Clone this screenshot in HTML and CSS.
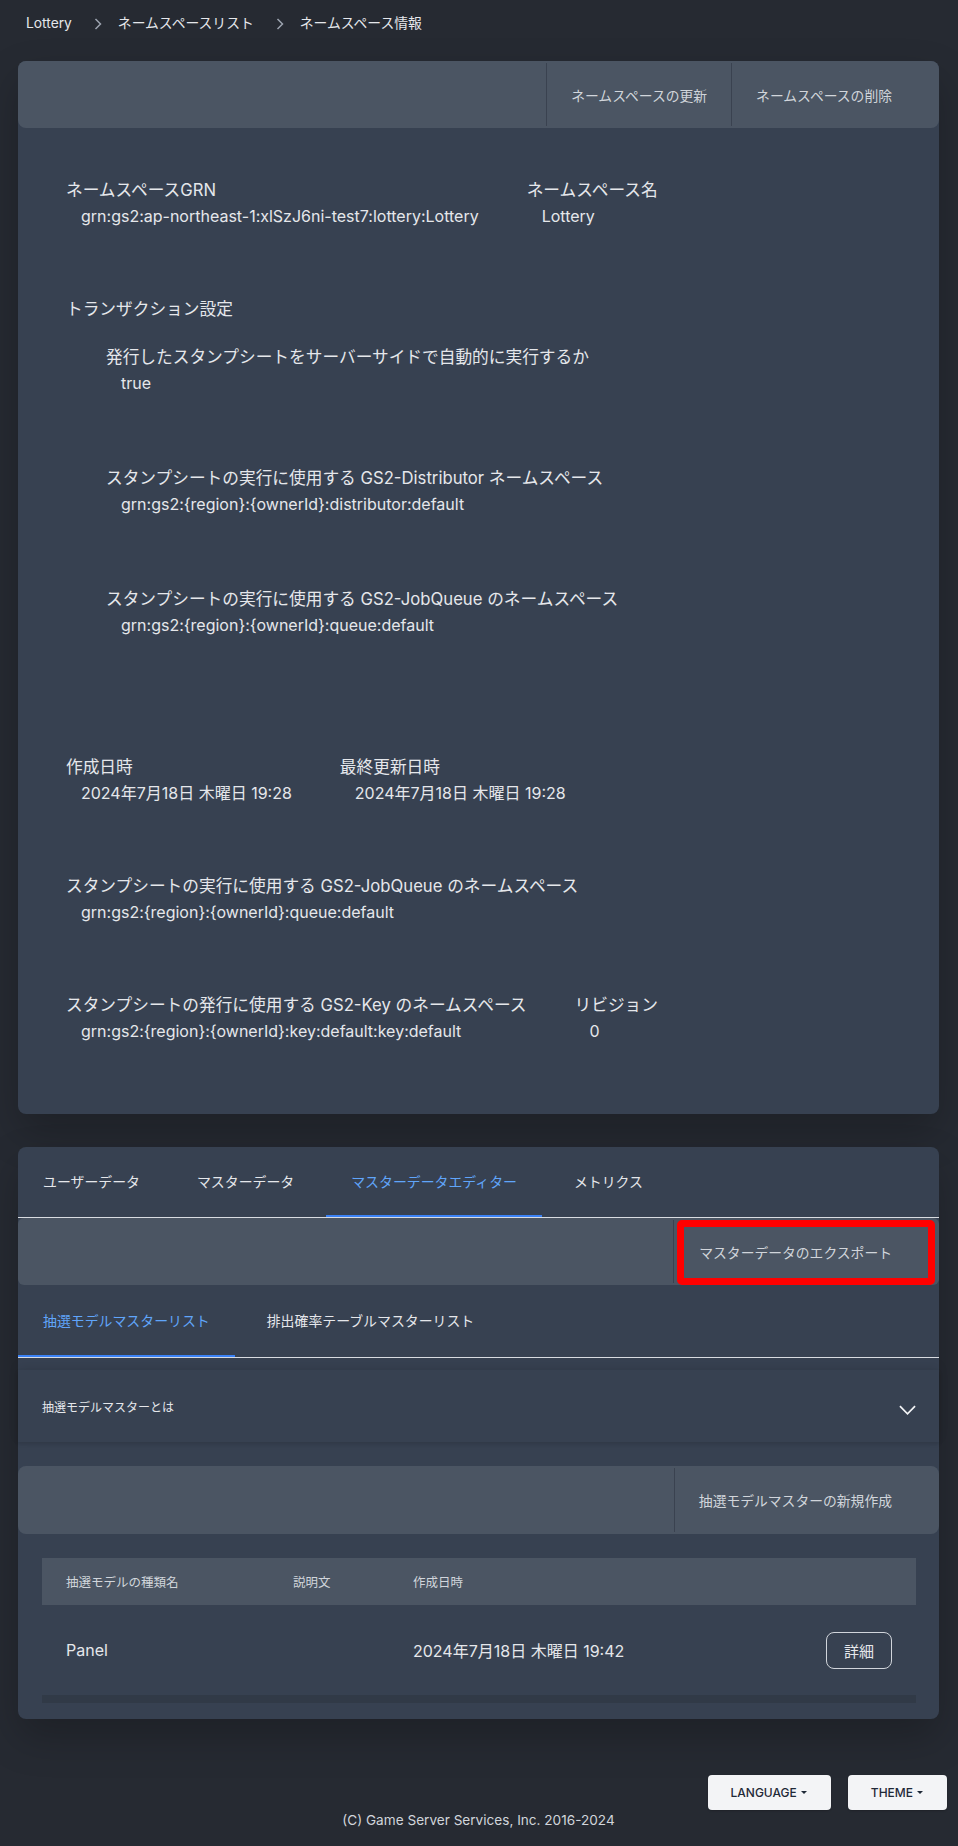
FILE: index.html
```html
<!DOCTYPE html>
<html lang="ja">
<head>
<meta charset="utf-8">
<title>ネームスペース情報</title>
<link rel="stylesheet" href="styles.css">
</head>
<body>
<div class="page">
  <nav class="crumbs">
    <span class="crumb">Lottery</span>
    <svg class="sep" viewBox="0 0 8 12"><path d="M1.5 1 L6.5 6 L1.5 11"/></svg>
    <span class="crumb">ネームスペースリスト</span>
    <svg class="sep" viewBox="0 0 8 12"><path d="M1.5 1 L6.5 6 L1.5 11"/></svg>
    <span class="crumb">ネームスペース情報</span>
  </nav>

  <section class="panel">
    <div class="toolbar">
      <button class="tb-btn">ネームスペースの更新</button>
      <button class="tb-btn">ネームスペースの削除</button>
    </div>
    <div class="info-body">
      <div class="row">
        <div class="field">
          <div class="flabel">ネームスペースGRN</div>
          <div class="fvalue">grn:gs2:ap-northeast-1:xlSzJ6ni-test7:lottery:Lottery</div>
        </div>
        <div class="field">
          <div class="flabel">ネームスペース名</div>
          <div class="fvalue">Lottery</div>
        </div>
      </div>

      <div class="group">
        <div class="flabel">トランザクション設定</div>
        <div class="nested">
          <div class="field">
            <div class="flabel">発行したスタンプシートをサーバーサイドで自動的に実行するか</div>
            <div class="fvalue">true</div>
          </div>
          <div class="field">
            <div class="flabel">スタンプシートの実行に使用する GS2-Distributor ネームスペース</div>
            <div class="fvalue">grn:gs2:{region}:{ownerId}:distributor:default</div>
          </div>
          <div class="field">
            <div class="flabel">スタンプシートの実行に使用する GS2-JobQueue のネームスペース</div>
            <div class="fvalue">grn:gs2:{region}:{ownerId}:queue:default</div>
          </div>
        </div>
      </div>

      <div class="row">
        <div class="field">
          <div class="flabel">作成日時</div>
          <div class="fvalue">2024年7月18日 木曜日 19:28</div>
        </div>
        <div class="field">
          <div class="flabel">最終更新日時</div>
          <div class="fvalue">2024年7月18日 木曜日 19:28</div>
        </div>
      </div>

      <div class="row">
        <div class="field">
          <div class="flabel">スタンプシートの実行に使用する GS2-JobQueue のネームスペース</div>
          <div class="fvalue">grn:gs2:{region}:{ownerId}:queue:default</div>
        </div>
      </div>

      <div class="row last">
        <div class="field">
          <div class="flabel">スタンプシートの発行に使用する GS2-Key のネームスペース</div>
          <div class="fvalue">grn:gs2:{region}:{ownerId}:key:default:key:default</div>
        </div>
        <div class="field">
          <div class="flabel">リビジョン</div>
          <div class="fvalue">0</div>
        </div>
      </div>
    </div>
  </section>

  <section class="panel master">
    <div class="tabs">
      <div class="tab">ユーザーデータ</div>
      <div class="tab">マスターデータ</div>
      <div class="tab active">マスターデータエディター</div>
      <div class="tab">メトリクス</div>
    </div>
    <div class="toolbar tb-square">
      <button class="tb-btn export">マスターデータのエクスポート</button>
    </div>
    <div class="tabs sub">
      <div class="tab active">抽選モデルマスターリスト</div>
      <div class="tab">排出確率テーブルマスターリスト</div>
    </div>
    <div class="accordion">
      <span class="acc-title">抽選モデルマスターとは</span>
      <svg class="chev" viewBox="0 0 18 10"><path d="M1 1 L9 9 L17 1"/></svg>
    </div>
    <div class="toolbar card-bar">
      <button class="tb-btn">抽選モデルマスターの新規作成</button>
    </div>
    <div class="table-wrap">
      <table class="models">
        <thead>
          <tr>
            <th class="c1">抽選モデルの種類名</th>
            <th class="c2">説明文</th>
            <th class="c3">作成日時</th>
            <th class="c4"></th>
          </tr>
        </thead>
        <tbody>
          <tr>
            <td class="c1">Panel</td>
            <td class="c2"></td>
            <td class="c3">2024年7月18日 木曜日 19:42</td>
            <td class="c4"><button class="detail">詳細</button></td>
          </tr>
        </tbody>
      </table>
      <div class="scrollbar"></div>
    </div>
  </section>

  <footer class="footer">
    <div class="footer-btns">
      <button class="pill">LANGUAGE<span class="caret"></span></button>
      <button class="pill">THEME<span class="caret"></span></button>
    </div>
    <p class="copy">(C) Game Server Services, Inc. 2016-2024</p>
  </footer>
</div>
</body>
</html>
```

FILE: styles.css
```css
* { box-sizing: border-box; }

html, body {
  margin: 0;
  padding: 0;
  background: #262a32;
}

body {
  font-family: Inter, "Noto Sans CJK JP", sans-serif;
  color: #e5e7eb;
  min-height: 1846px;
}

button {
  font: inherit;
  color: inherit;
  background: none;
  border: 0;
  padding: 0;
  margin: 0;
  cursor: pointer;
}

.page {
  padding: 0 19px 0 18px;
}

/* breadcrumb */
.crumbs {
  display: flex;
  align-items: center;
  padding: 14px 0 0 8px;
  height: 33px;
  margin-bottom: 28px;
  font-size: 13.8px;
  line-height: 19px;
  color: #e5e7eb;
}

.sep {
  width: 8px;
  height: 12px;
  margin: 0 16px 0 22px;
  fill: none;
  stroke: #9ca3af;
  stroke-width: 1.5;
}

/* panels */
.panel {
  background: #374151;
  border-radius: 8px;
  box-shadow: 0 18px 40px rgba(0, 0, 0, 0.22);
}

.toolbar {
  height: 67px;
  display: flex;
  justify-content: flex-end;
  align-items: stretch;
  padding: 2px 23px 2px 0;
  background: #4b5563;
  border-radius: 8px;
}

.tb-btn {
  display: flex;
  align-items: center;
  padding: 0 24px;
  border-left: 1px solid #3a4250;
  font-size: 13.8px;
  color: #d1d5db;
  white-space: nowrap;
}

/* info body */
.info-body {
  display: flex;
  flex-direction: column;
  padding: 49px 48px 0 48px;
}

.row {
  display: flex;
  gap: 48px;
  margin-bottom: 67px;
}

.row.last {
  margin-bottom: 70px;
}

.flabel {
  font-size: 16.7px;
  line-height: 26px;
  color: #e5e7eb;
  white-space: nowrap;
}

.fvalue {
  font-size: 16px;
  line-height: 26px;
  padding-left: 15px;
  color: #e5e7eb;
  white-space: nowrap;
}

.group {
  margin-bottom: 47px;
}

.nested {
  display: flex;
  flex-direction: column;
  margin-top: 22px;
  padding-left: 40px;
}

.nested .field {
  margin-bottom: 69px;
}

/* master panel */
.master {
  margin-top: 33px;
  padding-bottom: 16px;
}

.tabs {
  display: flex;
  gap: 7px;
  height: 71px;
  border-bottom: 1px solid #d9dce1;
}

.tab {
  display: flex;
  align-items: center;
  padding: 0 25px;
  border-bottom: 2px solid transparent;
  font-size: 13.9px;
  color: #e5e7eb;
  white-space: nowrap;
}

.tab.active {
  color: #60a5fa;
  border-bottom-color: #3b82f6;
}

.tabs.sub {
  height: 73px;
}

.tb-square {
  border-radius: 6px;
}

.export {
  position: relative;
  padding: 0 24px 0 25px;
}

.export::after {
  content: "";
  position: absolute;
  left: 3px;
  right: -19px;
  top: 0;
  bottom: -2px;
  border: 7px solid #ff0000;
  border-radius: 5px;
}

.accordion {
  margin-top: 12px;
  height: 72px;
  display: flex;
  align-items: center;
  justify-content: space-between;
  padding: 0 23px 0 24px;
  background: #374151;
  box-shadow: 0 -4px 10px rgba(0, 0, 0, 0.08), 0 2px 4px rgba(0, 0, 0, 0.12);
}

.acc-title {
  font-size: 12px;
  color: #e5e7eb;
}

.chev {
  width: 17px;
  height: 10px;
  margin-top: 7px;
  fill: none;
  stroke: #f3f4f6;
  stroke-width: 1.8;
}

.card-bar {
  margin-top: 24px;
  height: 68px;
}

.table-wrap {
  margin: 24px 23px 0 24px;
}

.models {
  width: 100%;
  border-collapse: collapse;
  table-layout: fixed;
}

.models th {
  height: 47px;
  background: #4b5563;
  text-align: left;
  font-weight: 400;
  font-size: 12.5px;
  color: #d1d5db;
  padding: 0 0 0 24px;
}

.models td {
  height: 90px;
  padding: 0 0 0 24px;
  font-size: 16px;
  color: #e5e7eb;
}

.models .c1 { width: 227px; }
.models .c2 { width: 120px; }
.models .c4 { width: 120px; text-align: right; padding-right: 24px; }

.detail {
  width: 66px;
  height: 37px;
  border: 1px solid #d1d5db;
  border-radius: 8px;
  font-size: 15px;
  color: #e5e7eb;
}

.scrollbar {
  height: 8px;
  background: #313a47;
}

/* footer */
.footer {
  margin-top: 56px;
}

.footer-btns {
  display: flex;
  justify-content: flex-end;
  gap: 17px;
  margin-right: -8px;
}

.pill {
  height: 35px;
  display: flex;
  align-items: center;
  padding: 0 24px 0 23px;
  background: #f3f4f6;
  border-radius: 4px;
  font-size: 12px;
  font-weight: 500;
  color: #1f2937;
  box-shadow: 0 1px 2px rgba(0, 0, 0, 0.2);
}

.caret {
  display: inline-block;
  margin-left: 4px;
  border-left: 3px solid transparent;
  border-right: 3px solid transparent;
  border-top: 3px solid #1f2937;
}

.copy {
  margin: 0;
  text-align: center;
  font-size: 13.6px;
  line-height: 20px;
  color: #d1d5db;
}
```
